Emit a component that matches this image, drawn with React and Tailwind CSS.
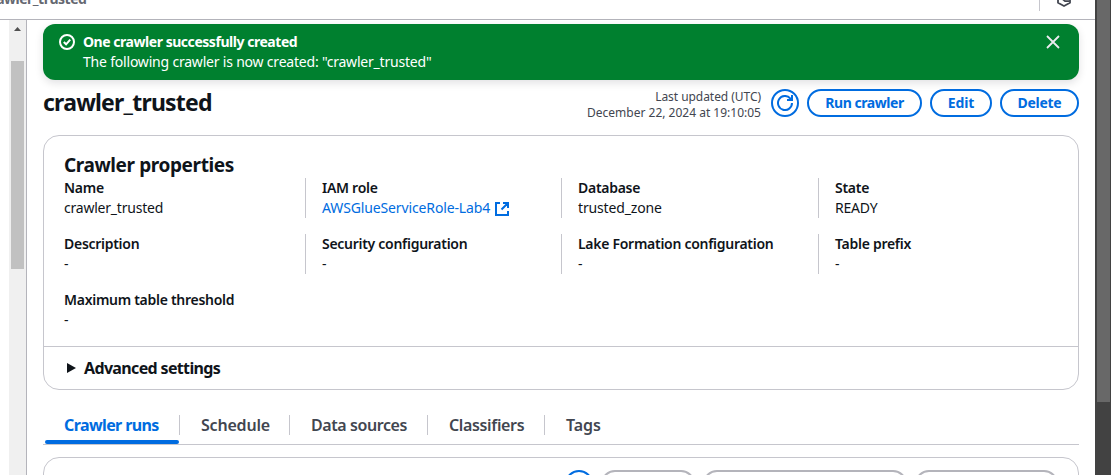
const Refresh = () => (
  <svg width="16" height="16" viewBox="0 0 16 16" fill="none" stroke="currentColor" strokeWidth="2">
    <path d="M15 8a7 7 0 1 1-1.800-4.700L14.600 5" />
    <path d="M10 5h5V0" />
  </svg>
);

const Button = ({ className, children }) => (
  <div className={`flex h-7 items-center justify-center rounded-full border-2 border-[#006ce0] text-sm font-bold text-[#006ce0] ${className}`}>
    {children}
  </div>
);

const Field = ({ label, divided, children, valueClass = '' }) => (
  <div className={`h-10 ${divided ? 'border-l border-[#c6c6cd] pl-4' : 'pl-5'}`}>
    <div className="h-5 text-sm leading-5 font-semibold tracking-[-0.28px] whitespace-nowrap">{label}</div>
    <div className={`flex h-5 items-center text-sm leading-5 whitespace-nowrap ${valueClass}`}>{children}</div>
  </div>
);

const tabs = [
  { label: 'Schedule', className: 'w-[110px] pl-[21px] tracking-[-0.2px]' },
  { label: 'Data sources', className: 'w-[138px] pl-[21px] tracking-[-0.42px]' },
  { label: 'Classifiers', className: 'w-[117px] pl-[21px] tracking-[-0.35px]' },
  { label: 'Tags', className: 'pl-[21px] tracking-[-0.1px]' },
];

export default function App() {
  return (
    <div className="flex h-[475px] w-[1111px] overflow-hidden bg-white font-['Noto_Sans',sans-serif] text-[#0f141a]">
      <div className="flex w-[1095px] flex-col">
        <header className="flex h-5 shrink-0 justify-between overflow-hidden border-b border-[#b4b4bb]">
          <div className="-mt-[11px] -ml-[16px] h-5 text-sm leading-5 font-bold tracking-[-0.5px] text-[#656871]">crawler_trusted</div>
          <div className="flex h-[11px] items-start border-l border-[#c6c6cd] pr-[23px] pl-4">
            <svg className="-mt-[9px]" width="16" height="16" viewBox="0 0 16 16" fill="none" stroke="#424650" strokeWidth="1.800" strokeLinejoin="round">
              <path d="M8 1l6 3.500v7.300L8 15l-6-3.200V4.500z" />
              <path d="M6 7.500l3 2.700h4.500" />
            </svg>
          </div>
        </header>
        <div className="flex h-[455px]">
          <div className="ml-[9px] flex w-[18px] shrink-0 flex-col border-r border-[#b4b4bb] bg-[#f0f0f0] pl-0.5">
            <svg className="mt-[7px] ml-[3px]" width="7" height="4" viewBox="0 0 7 4"><path d="M0 4L3.500 0 7 4z" fill="#505050" /></svg>
            <div className="mt-[30px] h-[208px] w-[13px] bg-[#c1c1c1]" />
          </div>
          <main className="w-[1068px] px-4 pt-1">
            <div className="flex h-14 rounded-xl bg-[#00802f] pt-2 pr-[19px] pl-4 text-sm leading-5 text-white shadow-[0_3px_8px_rgba(0,7,22,0.12)]">
              <svg className="mt-0.5 mr-2 shrink-0" width="16" height="16" viewBox="0 0 16 16" fill="none" stroke="currentColor" strokeWidth="2">
                <circle cx="8" cy="8" r="7" />
                <path d="M4.800 8l2.300 2.300L11.200 5.700" />
              </svg>
              <div className="grow">
                <div className="font-bold tracking-[-0.46px]">One crawler successfully created</div>
                <div className="tracking-[-0.2px]">The following crawler is now created: "crawler_trusted"</div>
              </div>
              <svg className="mt-[3px]" width="14" height="14" viewBox="0 0 14 14" stroke="#ebebf0" strokeWidth="1.800"><path d="M1 1l12 12M13 1L1 13" /></svg>
            </div>
            <div className="mt-[9px] flex h-7 items-center">
              <h1 className="-mt-0.5 grow text-[23px] leading-7 font-bold tracking-[-0.78px]">crawler_trusted</h1>
              <div className="mt-1 mr-[10px] text-right text-xs leading-4 whitespace-nowrap text-[#424650]">
                <div className="tracking-[-0.05px]">Last updated (UTC)</div>
                <div>December 22, 2024 at 19:10:05</div>
              </div>
              <Button className="w-7"><Refresh /></Button>
              <Button className="ml-2 w-[115px] tracking-[-0.45px]">Run crawler</Button>
              <Button className="ml-2 w-[62px] tracking-[-0.1px]">Edit</Button>
              <Button className="ml-2 w-[79px] tracking-[-0.3px]">Delete</Button>
            </div>
            <section className="mt-[18px] h-[255px] rounded-2xl border border-[#c6c6cd]">
              <h2 className="h-[42px] pt-[17px] pl-5 text-[19px] leading-6 font-bold tracking-[-0.4px]">Crawler properties</h2>
              <div className="grid h-[168px] grid-cols-[261px_256px_257px_1fr] content-start gap-y-4">
                <Field label="Name"><span className="tracking-[-0.22px]">crawler_trusted</span></Field>
                <Field label="IAM role" divided valueClass="text-[#006ce0]">
                  <span className="tracking-[-0.13px]">AWSGlueServiceRole-Lab4</span>
                  <svg className="ml-1" width="15" height="15" viewBox="0 0 15 15" fill="none" stroke="currentColor" strokeWidth="2">
                    <path d="M6 2H2v12h12v-4M9 2h5v5M14 2L7.500 8.500" />
                  </svg>
                </Field>
                <Field label="Database" divided><span className="tracking-[-0.15px]">trusted_zone</span></Field>
                <Field label="State" divided><span className="tracking-[-0.2px]">READY</span></Field>
                <Field label="Description">-</Field>
                <Field label="Security configuration" divided>-</Field>
                <Field label="Lake Formation configuration" divided>-</Field>
                <Field label="Table prefix" divided>-</Field>
                <Field label="Maximum table threshold">-</Field>
              </div>
              <div className="flex h-[43px] items-center border-t border-[#c6c6cd] pl-[23px]">
                <svg width="9" height="10" viewBox="0 0 9 10"><path d="M0 0l9 5-9 5z" fill="#0f141a" /></svg>
                <h3 className="ml-2 text-base leading-5 font-bold tracking-[-0.65px]">Advanced settings</h3>
              </div>
            </section>
            <nav className="mt-[15px] flex h-10 items-center border-b border-[#c6c6cd] text-base font-semibold text-[#424650]">
              <div className="ml-0.5 flex h-10 w-[134px] flex-col">
                <div className="h-[35px] pt-[10px] pl-[19px] leading-5 font-bold tracking-[-0.6px] whitespace-nowrap text-[#006ce0]">Crawler runs</div>
                <div className="h-1 rounded-sm bg-[#006ce0]" />
              </div>
              {tabs.map((tab) => (
                <div key={tab.label} className={`h-5 border-l border-[#c6c6cd] leading-5 whitespace-nowrap ${tab.className}`}>{tab.label}</div>
              ))}
            </nav>
            <section className="mt-3 flex h-20 justify-end rounded-2xl border border-[#c6c6cd] pt-3 pr-5">
              <div className="h-7 w-7 rounded-full border-2 border-[#006ce0]" />
              <div className="ml-2 h-7 w-[94px] rounded-full border-2 border-[#b4b4bb]" />
              <div className="ml-2 h-7 w-[204px] rounded-full border-2 border-[#b4b4bb]" />
              <div className="ml-2 h-7 w-[143px] rounded-full border-2 border-[#b4b4bb]" />
            </section>
          </main>
        </div>
      </div>
      <div className="h-[475px] w-4 bg-[#424242] pl-0.5"><div className="h-[402px] w-[13px] bg-[#686868]" /></div>
    </div>
  );
}
